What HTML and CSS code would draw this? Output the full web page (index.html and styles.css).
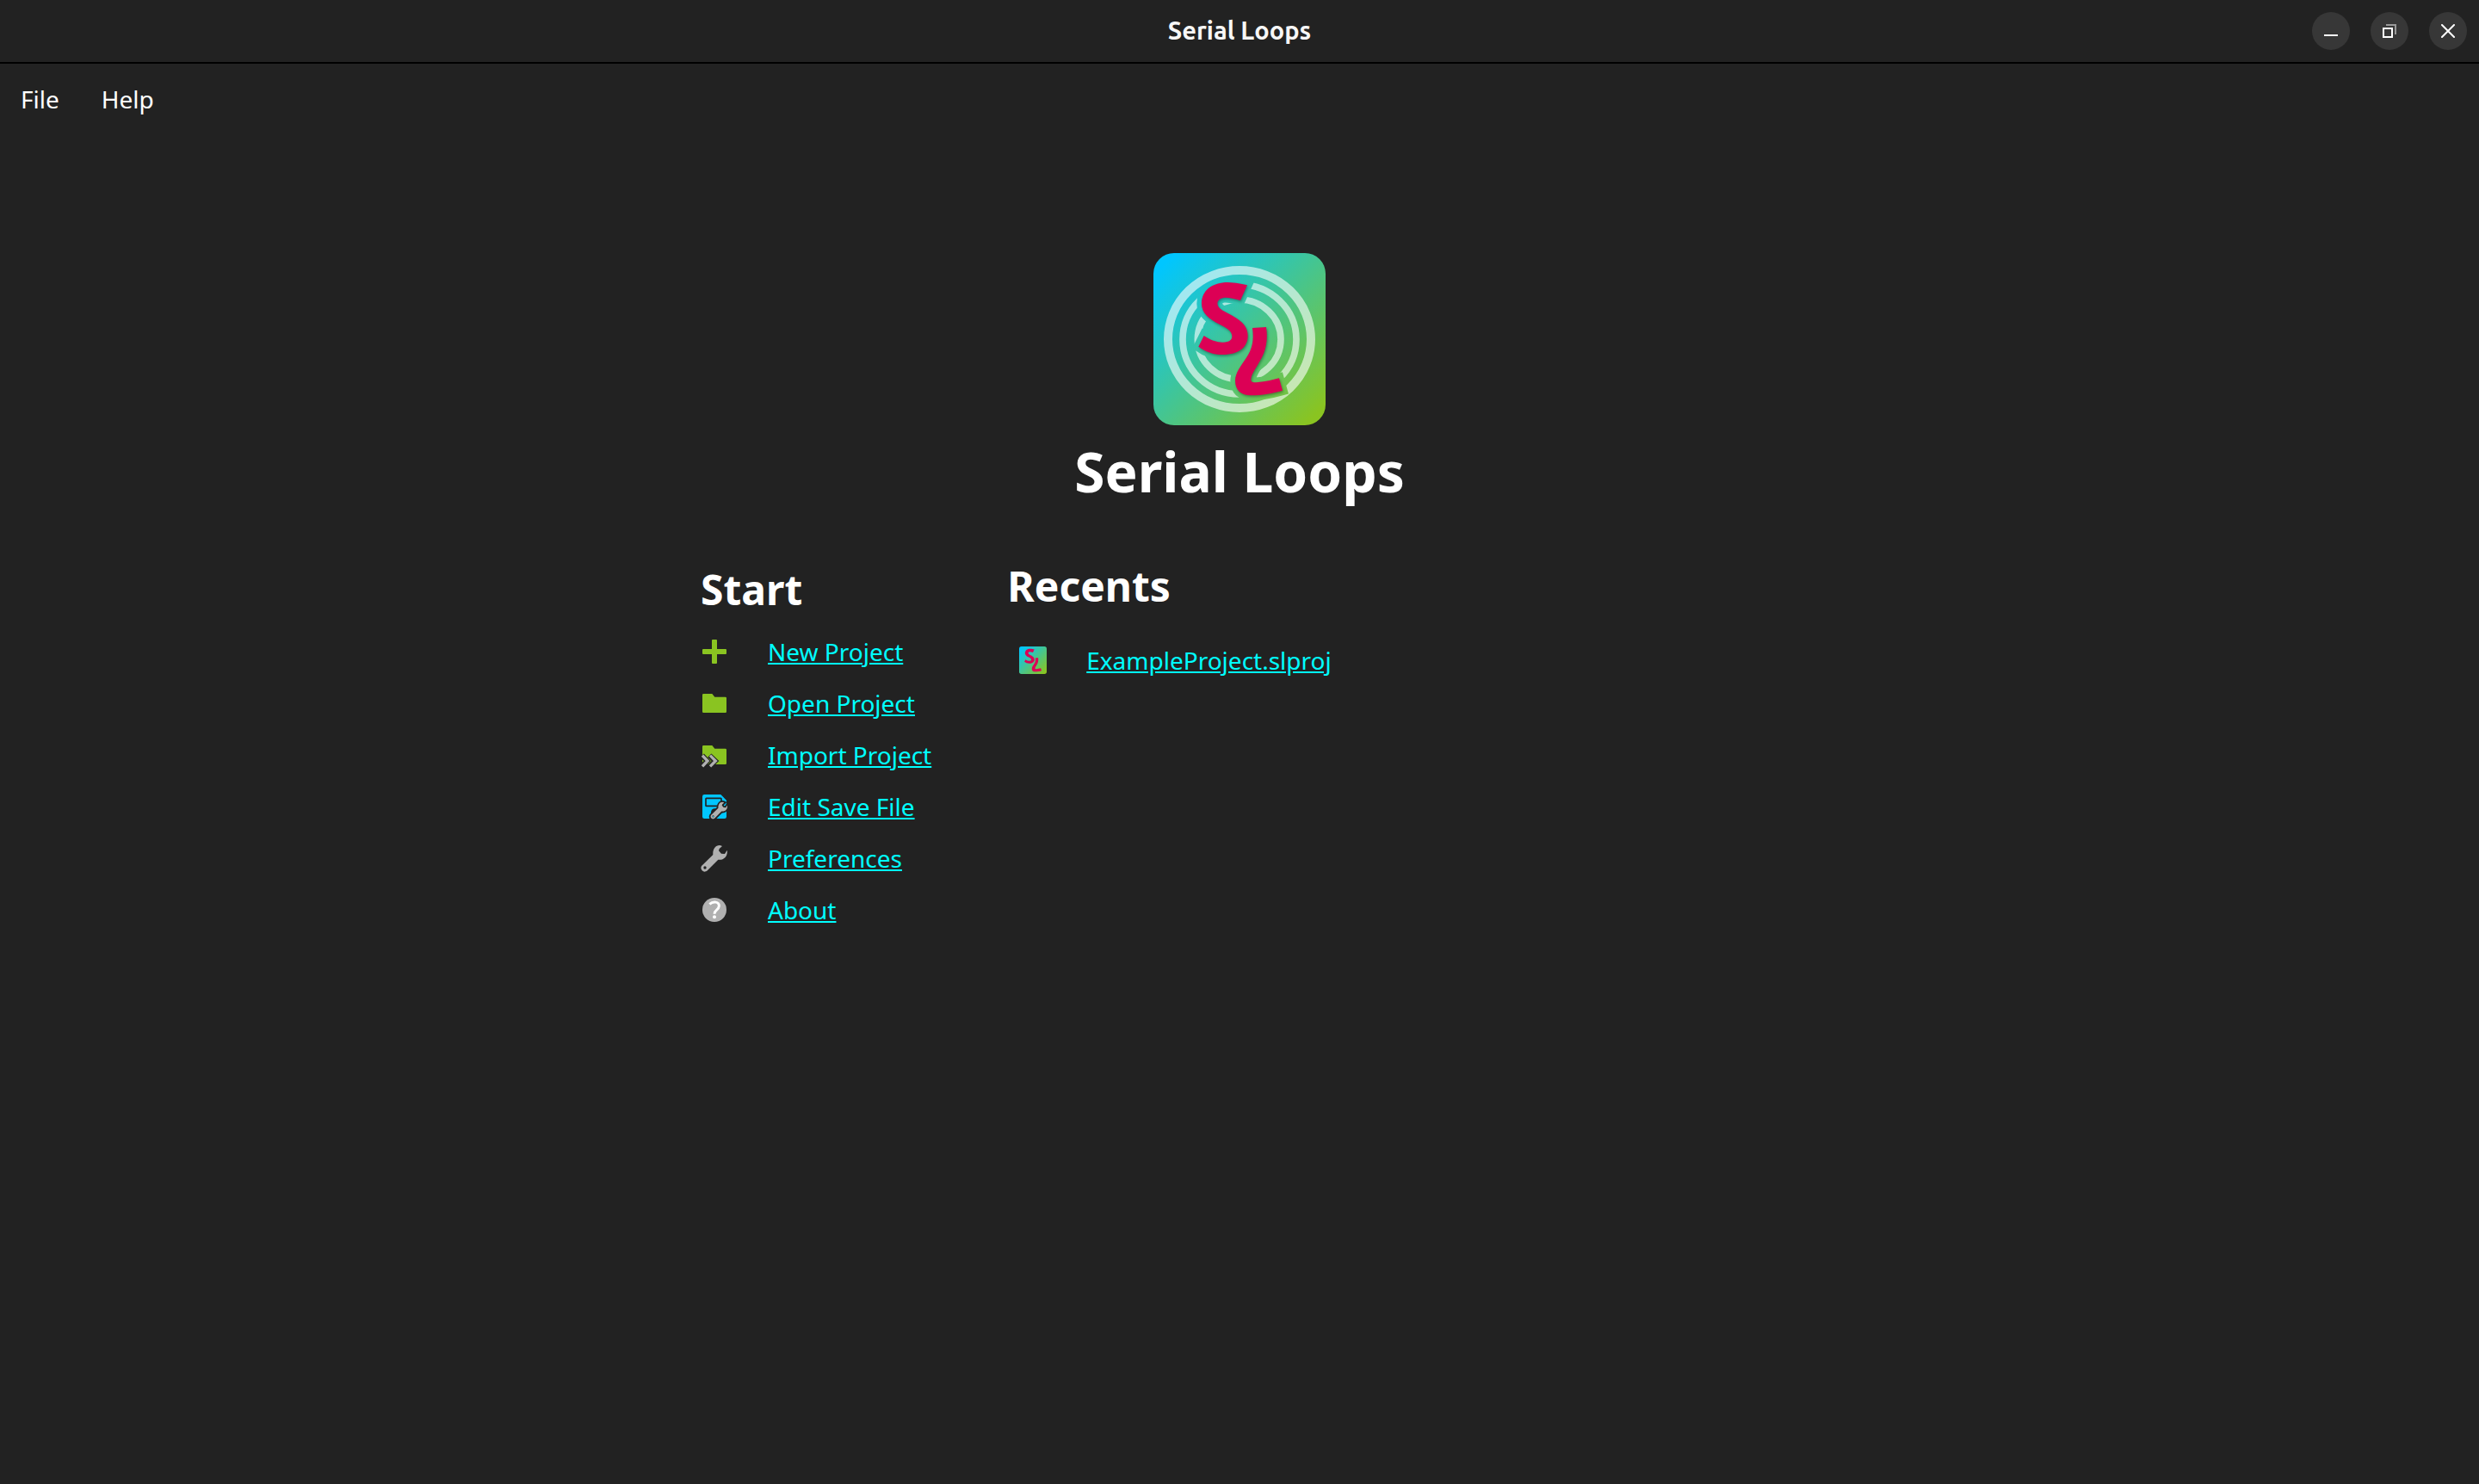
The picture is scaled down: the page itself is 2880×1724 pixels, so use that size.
FILE: index.html
```html
<!DOCTYPE html>
<html lang="en">
<head>
<meta charset="utf-8">
<title>Serial Loops</title>
<link rel="stylesheet" href="styles.css">
</head>
<body>
<svg class="defs" aria-hidden="true">
  <defs>
    <linearGradient id="brand" x1="0" y1="0" x2="1" y2="1">
      <stop offset="0.06" stop-color="#00c6ff"/>
      <stop offset="0.94" stop-color="#8ac421"/>
    </linearGradient>
    <g id="letters">
      <path d="M387 154L363 207C340 201 320 196 304 198C288 201 281 210 284 223C288 238 310 247 335 260C370 279 389 300 389 330C389 370 358 396 302 396C268 396 240 385 217 368L236 330C258 346 285 354 303 353C325 352 335 345 334 330C332 312 315 303 290 290C255 272 228 252 228 218C228 172 265 144 320 144C345 145 370 150 387 154Z"/>
      <path d="M405 303L453 300C460 345 452 385 430 420C415 447 401 465 400 482C400 492 406 494 425 492C450 490 475 485 498 478L510 521C475 531 440 538 400 538C365 538 345 520 345 487C345 460 365 435 385 405C405 375 411 345 405 303Z"/>
    </g>
    <path id="wrench" d="M117 402C100 393 83 408 85 432L49 467A13 13 0 1 0 67 485L103 449C122 453 138 436 134 416L126 429L114 428L105 418L107 411ZM57 472A5 5 0 1 1 57 482A5 5 0 1 1 57 472Z"/>
    <path id="folder" d="M52 51H82L91 62H128Q132 62 132 66V113Q132 117 128 117H52Q48 117 48 113V55Q48 51 52 51Z"/>
  </defs>
</svg>

<header class="titlebar">
  <div class="window-title">Serial Loops</div>
  <div class="window-controls">
    <button type="button" aria-label="Minimize"><svg viewBox="0 0 16 16"><path d="M0 13H16" stroke="#fff" stroke-width="2"/></svg></button>
    <button type="button" aria-label="Restore"><svg viewBox="0 0 16 16" fill="none" stroke-width="2"><path d="M4 1H15V12" stroke="#999"/><path d="M1 5H11V15H1Z" stroke="#fff"/></svg></button>
    <button type="button" aria-label="Close"><svg viewBox="0 0 16 16"><path d="M1 1L15 15M15 1L1 15" stroke="#fff" stroke-width="2" stroke-linecap="round"/></svg></button>
  </div>
</header>

<nav class="menubar">
  <button type="button">File</button>
  <button type="button">Help</button>
</nav>

<main class="home">
  <svg class="logo" viewBox="60 42 600 600" role="img" aria-label="Serial Loops logo">
    <mask id="cutout">
      <rect x="60" y="42" width="600" height="600" fill="#fff"/>
      <use href="#letters" fill="#000" stroke="#000" stroke-width="34"/>
    </mask>
    <rect x="60" y="42" width="600" height="600" rx="72" fill="url(#brand)"/>
    <g fill="none" stroke="#fff" stroke-opacity="0.6" mask="url(#cutout)">
      <ellipse cx="360" cy="342" rx="249" ry="240" stroke-width="30"/>
      <ellipse cx="360" cy="343" rx="198" ry="191" stroke-width="23"/>
      <ellipse cx="359" cy="343" rx="145" ry="139" stroke-width="23"/>
    </g>
    <use class="logo-letters" href="#letters"/>
  </svg>
  <h1>Serial Loops</h1>

  <div class="panels">
    <section class="start">
      <h2>Start</h2>
      <ul>
        <li><svg class="icon" viewBox="42 306 96 96"><path d="M84 312H96Q99 312 99 315V393Q99 396 96 396H84Q81 396 81 393V315Q81 312 84 312ZM51 345H129Q132 345 132 348V360Q132 363 129 363H51Q48 363 48 360V348Q48 345 51 345Z" fill="#8ac421"/></svg><a href="#new">New Project</a></li>
        <li><svg class="icon" viewBox="42 486 96 96"><use href="#folder" y="450" fill="#8ac421"/></svg><a href="#open">Open Project</a></li>
        <li><svg class="icon" viewBox="42 36 96 96"><use href="#folder" fill="#8ac421"/><g fill="none"><path d="M47 86L65 105L47 124M73 86L93 105L73 124" stroke="#222" stroke-width="18"/><path d="M48 86L66 105L48 124M75 86L94 105L75 124" stroke="#b0b0b0" stroke-width="10"/></g></svg><a href="#import">Import Project</a></li>
        <li><svg class="icon" viewBox="42 216 96 96"><path d="M55 222H112L132 242V299Q132 306 125 306H55Q48 306 48 299V229Q48 222 55 222Z" fill="#00c6ff"/><rect x="60" y="235" width="54" height="27" rx="2" fill="none" stroke="#222" stroke-width="5"/><circle cx="91" cy="284" r="13" fill="#222"/><use href="#wrench" transform="translate(49 -7) scale(.64)" fill="#222" stroke="#222" stroke-width="17"/><use href="#wrench" transform="translate(49 -7) scale(.64)" fill="#b0b0b0"/></svg><a href="#save">Edit Save File</a></li>
        <li><svg class="icon" viewBox="42 396 96 96"><use href="#wrench" fill="#b0b0b0"/></svg><a href="#preferences">Preferences</a></li>
        <li><svg class="icon" viewBox="42 576 96 96"><circle cx="90" cy="624" r="42" fill="#b0b0b0"/><path d="M73 604C85 594 107 594 106 611C105 625 90 624 90 638" fill="none" stroke="#fff" stroke-width="9"/><circle cx="90" cy="649" r="6" fill="#fff"/></svg><a href="#about">About</a></li>
      </ul>
    </section>
    <section class="recents">
      <h2>Recents</h2>
      <ul>
        <li><svg class="icon" viewBox="60 42 600 600"><rect x="60" y="42" width="600" height="600" rx="50" fill="url(#brand)"/><use href="#letters" fill="#dc0055" transform="translate(-101 -91) scale(1.27)"/></svg><a href="#example">ExampleProject.slproj</a></li>
      </ul>
    </section>
  </div>
</main>
</body>
</html>
```
FILE: styles.css
```css
* {
  box-sizing: border-box;
}

body {
  margin: 0;
  background: #222;
  color: #fff;
  font-family: "Noto Sans", "Open Sans", sans-serif;
  font-size: 28px;
  line-height: 40px;
}

button {
  border: 0;
  padding: 0;
  background: none;
  color: inherit;
  font: inherit;
}

.defs {
  position: absolute;
  width: 0;
  height: 0;
}

.titlebar {
  display: grid;
  grid-template-columns: 1fr auto 1fr;
  align-items: center;
  height: 74px;
  padding: 0 14px;
  border-bottom: 2px solid #000;
}

.window-title {
  grid-column: 2;
  padding-bottom: 2px;
  color: #f7f7f7;
  font-family: Ubuntu, "Noto Sans", sans-serif;
  font-size: 29px;
  font-weight: 600;
}

.window-controls {
  display: flex;
  justify-content: flex-end;
  gap: 24px;
}

.window-controls button {
  display: grid;
  place-items: center;
  width: 44px;
  height: 44px;
  border-radius: 50%;
  background: #373737;
}

.window-controls svg {
  width: 16px;
  height: 16px;
}

.menubar {
  display: flex;
  gap: 49px;
  padding: 21px 24px;
}

.home {
  display: flex;
  flex-direction: column;
  align-items: center;
  padding: 138px 24px 48px;
}

.logo {
  width: 200px;
  height: 200px;
}

.logo-letters {
  fill: #dc0055;
  filter: drop-shadow(3px 5px 5px rgb(0 0 0 / 35%));
}

h1 {
  margin: 10px 0 57px;
  font-size: 64px;
  line-height: 88px;
}

.panels {
  display: grid;
  grid-template-columns: auto 1fr;
  gap: 88px;
  width: 100%;
  max-width: 1252px;
}

h2 {
  margin: 0;
  font-size: 48px;
  line-height: 64px;
}

.start {
  padding-top: 4px;
}

ul {
  margin: 0;
  padding: 10px 0 0;
  list-style: none;
}

.recents ul {
  padding: 24px 0 0 14px;
}

li {
  display: flex;
  align-items: center;
  gap: 46px;
  height: 60px;
}

.icon {
  width: 32px;
  height: 32px;
}

a {
  color: #0ff;
}
```
